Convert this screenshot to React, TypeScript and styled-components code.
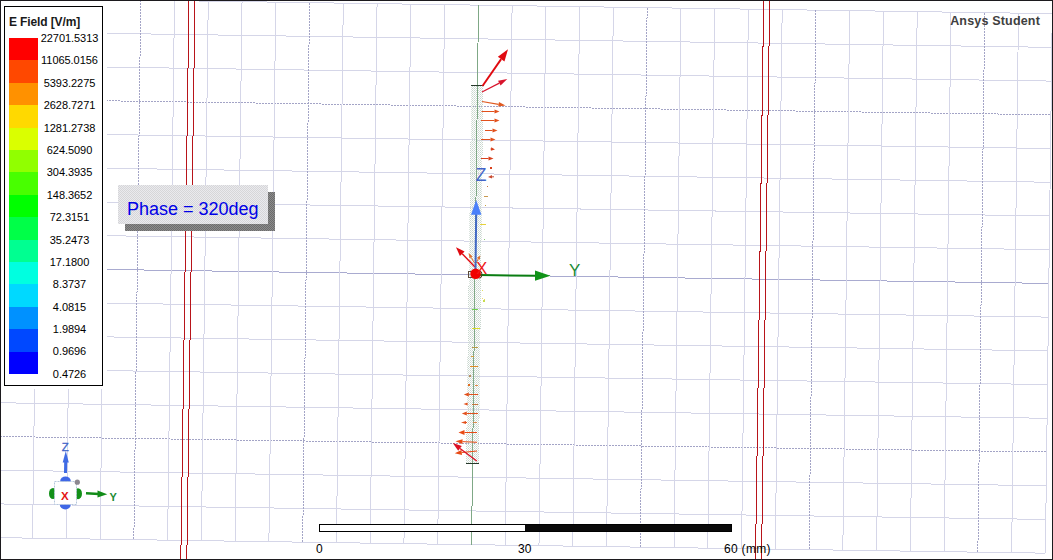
import React from 'react';
import styled, { createGlobalStyle } from 'styled-components';

const GlobalStyle = createGlobalStyle`
  html, body { margin: 0; padding: 0; background: #fff; }
  body { font-family: "Liberation Sans", Arial, sans-serif; overflow: hidden; }
`;

const Viewport = styled.main`
  position: relative;
  box-sizing: border-box;
  width: 1053px;
  height: 560px;
  border: 1px solid #1c1a1e;
  overflow: hidden;
  background: #fff;
`;

const Scene = styled.svg`
  position: absolute;
  top: -1px;
  left: -1px;
  display: block;
`;

const Legend = styled.section`
  position: absolute;
  left: 3px;
  top: 5px;
  box-sizing: border-box;
  width: 99px;
  height: 380px;
  border: 1px solid #000;
  background: #fff;
  padding: 8px 0 0 4px;
`;

const LegendTitle = styled.h1`
  margin: 0;
  height: 23px;
  font-size: 12px;
  line-height: 14px;
  font-weight: 700;
  letter-spacing: -0.12px;
  color: #1a1a1a;
  white-space: nowrap;
`;

const LegendBody = styled.div`
  display: flex;
`;

const Ramp = styled.div`
  display: flex;
  flex-direction: column;
  width: 29px;
  height: 336px;
`;

const Swatch = styled.div<{ $color: string }>`
  flex: 1;
  background: ${(p) => p.$color};
`;

const Values = styled.div`
  display: flex;
  flex-direction: column;
  width: 63px;
  margin-top: -11px;
`;

const Value = styled.span`
  height: 22.4px;
  line-height: 22.4px;
  font-size: 11px;
  letter-spacing: -0.05px;
  text-align: center;
  color: #000;
`;

const PhaseTag = styled.div`
  position: absolute;
  left: 117px;
  top: 184px;
  box-sizing: border-box;
  width: 150px;
  height: 39px;
  padding-left: 9px;
  font-size: 18px;
  line-height: 48px;
  white-space: nowrap;
  color: #0000e6;
  background: repeating-conic-gradient(#d6d6d8 0 25%, #eaeaee 0 50%) 0 0 / 2px 2px;
`;

const PhaseShadow = styled.div`
  position: absolute;
  left: 124px;
  top: 191px;
  width: 150px;
  height: 39px;
  background: repeating-conic-gradient(#6c6c6c 0 25%, #8c8c8c 0 50%) 0 0 / 2px 2px;
`;

const Watermark = styled.div`
  position: absolute;
  right: 12px;
  top: 13px;
  font-size: 12.5px;
  line-height: 15px;
  font-weight: 700;
  letter-spacing: 0.18px;
  color: #404040;
`;

const ScaleBar = styled.div`
  position: absolute;
  left: 318px;
  top: 523px;
  box-sizing: border-box;
  width: 413px;
  height: 8px;
  border: 1px solid #000;
  display: flex;
  background: #fff;
`;

const ScaleFill = styled.div`
  margin-left: auto;
  width: 206px;
  background: #0a0a0a;
`;

const ScaleLabels = styled.div`
  position: absolute;
  left: 315px;
  top: 541px;
  display: grid;
  grid-template-columns: 202px 206px auto;
  font-size: 12px;
  line-height: 14px;
  color: #000;
`;

const ScaleLabel = styled.span<{ $spacing?: number }>`
  letter-spacing: ${(p) => p.$spacing ?? 0}px;
`;

const ramp = [
  '#ff0000', '#ff4800', '#ff9100', '#ffd900', '#daff00', '#91ff00', '#48ff00', '#00ff00',
  '#00ff48', '#00ff91', '#00ffe0', '#00d9ff', '#0091ff', '#0048ff', '#0000ff',
];

const values = [
  '22701.5313', '11065.0156', '5393.2275', '2628.7271', '1281.2738', '624.5090', '304.3935', '148.3652',
  '72.3151', '35.2473', '17.1800', '8.3737', '4.0815', '1.9894', '0.9696', '0.4726',
];

/* Maps grid steps (k across, i down) to screen coordinates of the tilted plane. */
const point = (k: number, i: number): [number, number] => [
  474.9 + 33.76 * k - 0.43 * i,
  274.9 + 33.72 * i + 0.5 * k,
];

const range = (a: number, b: number) => Array.from({ length: b - a + 1 }, (_, n) => a + n);

function GridLine({ a, b, major, axis }: { a: [number, number]; b: [number, number]; major: boolean; axis: boolean }) {
  return (
    <line
      x1={a[0]} y1={a[1]} x2={b[0]} y2={b[1]}
      stroke={axis ? '#a9abd0' : major ? '#a3a4c6' : '#d5d6e8'}
      strokeWidth={1}
      strokeDasharray={major && !axis ? '2 1' : undefined}
    />
  );
}

type ArrowProps = {
  from: [number, number];
  to: [number, number];
  color: string;
  head?: number;
  spread?: number;
  width?: number;
};

function Arrow({ from, to, color, head = 5, spread = 4, width = 1 }: ArrowProps) {
  const dx = to[0] - from[0];
  const dy = to[1] - from[1];
  const len = Math.hypot(dx, dy);
  const ux = dx / len;
  const uy = dy / len;
  const bx = to[0] - ux * head;
  const by = to[1] - uy * head;
  const h = spread / 2;
  return (
    <g>
      <line x1={from[0]} y1={from[1]} x2={bx} y2={by} stroke={color} strokeWidth={width} />
      <polygon
        points={`${to[0]},${to[1]} ${bx - uy * h},${by + ux * h} ${bx + uy * h},${by - ux * h}`}
        fill={color}
      />
    </g>
  );
}

const orange = '#e2501c';

const fieldArrows: ArrowProps[] = [
  { from: [482.5, 86], to: [508, 49.3], color: '#e00a10', head: 12, spread: 8, width: 1.9 },
  { from: [482, 92], to: [507.3, 79], color: '#d8142c', head: 9, spread: 5.5, width: 1.2 },
  { from: [482, 101.5], to: [505.5, 105.5], color: '#e05a20', head: 7, spread: 4.5, width: 1.2 },
  { from: [481.5, 111.5], to: [499.5, 111.5], color: orange },
  { from: [481, 120.5], to: [499.5, 120.5], color: orange },
  { from: [485, 130.5], to: [497.5, 130.5], color: orange },
  { from: [481, 139.5], to: [495.5, 139.5], color: orange },
  { from: [490.5, 149], to: [495, 149.5], color: '#d8401c', head: 4, spread: 3.5 },
  { from: [481, 158.5], to: [493.5, 158.5], color: '#d8401c' },
  { from: [494, 176.8], to: [488, 177], color: '#c84a30', head: 4, spread: 3.5 },
  { from: [475, 267], to: [456, 247.3], color: '#e00a10', head: 9, spread: 6.5, width: 1.4 },
  { from: [474.5, 263], to: [468.5, 253], color: '#e07030', head: 5, spread: 3.5 },
  { from: [476, 263], to: [480.3, 255.5], color: '#e07030', head: 4, spread: 3.5 },
  { from: [478, 394.5], to: [463.8, 394.5], color: orange },
  { from: [468, 404], to: [463.5, 404], color: orange, head: 4, spread: 3 },
  { from: [478, 413.5], to: [461.8, 413.5], color: orange },
  { from: [467, 422.5], to: [461, 422.5], color: orange, head: 5, spread: 3 },
  { from: [477, 432.5], to: [458.5, 432.5], color: '#e84a14', head: 6, spread: 5 },
  { from: [477, 442.3], to: [455.5, 441.3], color: '#e84a14', head: 7, spread: 5 },
  { from: [477, 451], to: [454.8, 453.2], color: '#e84a14', head: 7, spread: 5 },
  { from: [476.8, 461], to: [452.8, 443], color: '#dc1024', head: 9, spread: 6, width: 1.3 },
];

/* Short vectors seen nearly end-on: x, y, length, colour. */
const dashes: [number, number, number, string][] = [
  [490, 167, 2, '#d8401c'], [487, 186, 1, '#c87848'], [484, 196, 4, '#c89a50'],
  [485, 205, 1, '#c8a040'], [480, 224, 6, '#e6d23c'], [484, 239, 1, '#8ac878'],
  [482, 290, 1, '#e6e060'], [484, 299, 1, '#e6d860'], [482, 298, 1, '#f0e070'],
  [472, 309, 6, '#6fd24a'], [483, 300, 2, '#c8dc50'], [472, 328, 8, '#d8dc28'],
  [472, 347, 6, '#b49a48'], [471, 356, 3, '#d8a040'], [470, 366, 8, '#e08a24'],
  [469, 375, 2, '#b89060'], [468, 384, 2, '#e06c20'], [475, 385, 3, '#e08a44'],
  [472, 404, 6, '#c8743c'], [473, 422, 4, '#d88a50'],
];

function FieldScene() {
  return (
    <Scene width="1053" height="560" viewBox="0 0 1053 560" fontFamily='"Liberation Sans", Arial, sans-serif'>
      <defs>
        <pattern id="mesh" width="2" height="2" patternUnits="userSpaceOnUse">
          <rect width="1" height="1" fill="#c8d6ce" />
          <rect x="1" y="1" width="1" height="1" fill="#dae3dd" />
        </pattern>
      </defs>

      <g shapeRendering="crispEdges">
        {range(-8, 8).map((i) => (
          <GridLine key={`h${i}`} a={point(-14.1, i)} b={point(17, i)} major={i % 5 === 0} axis={i === 0} />
        ))}
        {range(-14, 17).filter((k) => k !== 0).map((k) => (
          <GridLine key={`v${k}`} a={point(k, -8)} b={point(k, 8)} major={k % 5 === 0} axis={false} />
        ))}
        <rect x="0" y="0" width="107" height="389" fill="#fff" />
      </g>

      <g shapeRendering="crispEdges">
        <polygon points="471.3,86 483.3,86 479,463 466,463" fill="url(#mesh)" />
        <line x1="478.5" y1="5" x2="471.5" y2="545" stroke="#7fa886" />
        <line x1="471" y1="85.5" x2="484" y2="85.5" stroke="#26382a" />
        <line x1="466" y1="463.5" x2="479" y2="463.5" stroke="#26382a" />
      </g>

      <g stroke="#b8141a" strokeWidth="1" shapeRendering="crispEdges">
        <line x1="189" y1="0" x2="180.8" y2="560" />
        <line x1="195" y1="0" x2="186.8" y2="560" />
        <line x1="763.7" y1="0" x2="755.5" y2="560" />
        <line x1="769.7" y1="0" x2="761.5" y2="560" />
      </g>

      <g shapeRendering="crispEdges">
        {dashes.map(([x, y, w, c]) => (
          <rect key={`${x}-${y}`} x={x} y={y} width={w} height={w === 2 ? 2 : 1} fill={c} />
        ))}
      </g>
      {fieldArrows.map((a, n) => <Arrow key={n} {...a} />)}

      <line x1="475.5" y1="270" x2="476.2" y2="214" stroke="#4169c4" strokeWidth="2" />
      <polygon points="476.2,200 471,214.8 481.4,214.8" fill="#4a80fa" />
      <text x="475.8" y="181" fontSize="17.5" fill="#4264c8">Z</text>

      <line x1="480" y1="275" x2="536" y2="275.8" stroke="#0a7d12" strokeWidth="2" />
      <polygon points="550.5,275.8 535,270.6 535,280.8" fill="#109318" />
      <text x="569" y="275.5" fontSize="17" fill="#1c8c34">Y</text>

      <rect x="468.5" y="271.5" width="4" height="6" fill="none" stroke="#5a4a38" />
      <ellipse cx="479.5" cy="274.5" rx="2.5" ry="3.5" fill="none" stroke="#5a3a20" />
      <circle cx="475.6" cy="273.8" r="5.3" fill="#f00000" />
      <text x="476.3" y="273.5" fontSize="16.5" fill="#f01818">X</text>

      <ellipse cx="65.5" cy="481" rx="5.3" ry="4.5" fill="#4068e6" />
      <ellipse cx="65.3" cy="504.5" rx="5.5" ry="5" fill="#4068e6" />
      <ellipse cx="53" cy="493.5" rx="4" ry="5.5" fill="#129018" />
      <ellipse cx="78" cy="493.7" rx="4" ry="5.5" fill="#129018" />
      <rect x="54.5" y="481.5" width="22" height="23" fill="#fff" stroke="#b4c6dc" strokeDasharray="2 1" />
      <circle cx="77.3" cy="482.2" r="2.6" fill="#8c8890" />
      <text x="61" y="499.8" fontSize="11.5" fontWeight="700" fill="#e41414">X</text>

      <line x1="65.5" y1="473" x2="65.7" y2="461" stroke="#3f6be4" strokeWidth="3" />
      <polygon points="65.8,451 62.7,462.5 68.8,462.5" fill="#3f6be4" />
      <text x="61.7" y="451" fontSize="11.5" fill="#4264c8" stroke="#4264c8" strokeWidth="0.3">Z</text>

      <line x1="86" y1="493.3" x2="99" y2="494" stroke="#128c18" strokeWidth="2.4" />
      <polygon points="107.3,494.2 97.5,490.6 97.5,497.4" fill="#128c18" />
      <text x="109.6" y="500.8" fontSize="11" fontWeight="700" fill="#1c8c34">Y</text>
    </Scene>
  );
}

export default function App() {
  return (
    <>
      <GlobalStyle />
      <Viewport>
        <FieldScene />
        <Legend>
          <LegendTitle>E Field [V/m]</LegendTitle>
          <LegendBody>
            <Ramp>
              {ramp.map((c) => <Swatch key={c} $color={c} />)}
            </Ramp>
            <Values>
              {values.map((v) => <Value key={v}>{v}</Value>)}
            </Values>
          </LegendBody>
        </Legend>
        <PhaseShadow />
        <PhaseTag>Phase = 320deg</PhaseTag>
        <Watermark>Ansys Student</Watermark>
        <ScaleBar>
          <ScaleFill />
        </ScaleBar>
        <ScaleLabels>
          <ScaleLabel>0</ScaleLabel>
          <ScaleLabel>30</ScaleLabel>
          <ScaleLabel $spacing={0.3}>60 (mm)</ScaleLabel>
        </ScaleLabels>
      </Viewport>
    </>
  );
}
